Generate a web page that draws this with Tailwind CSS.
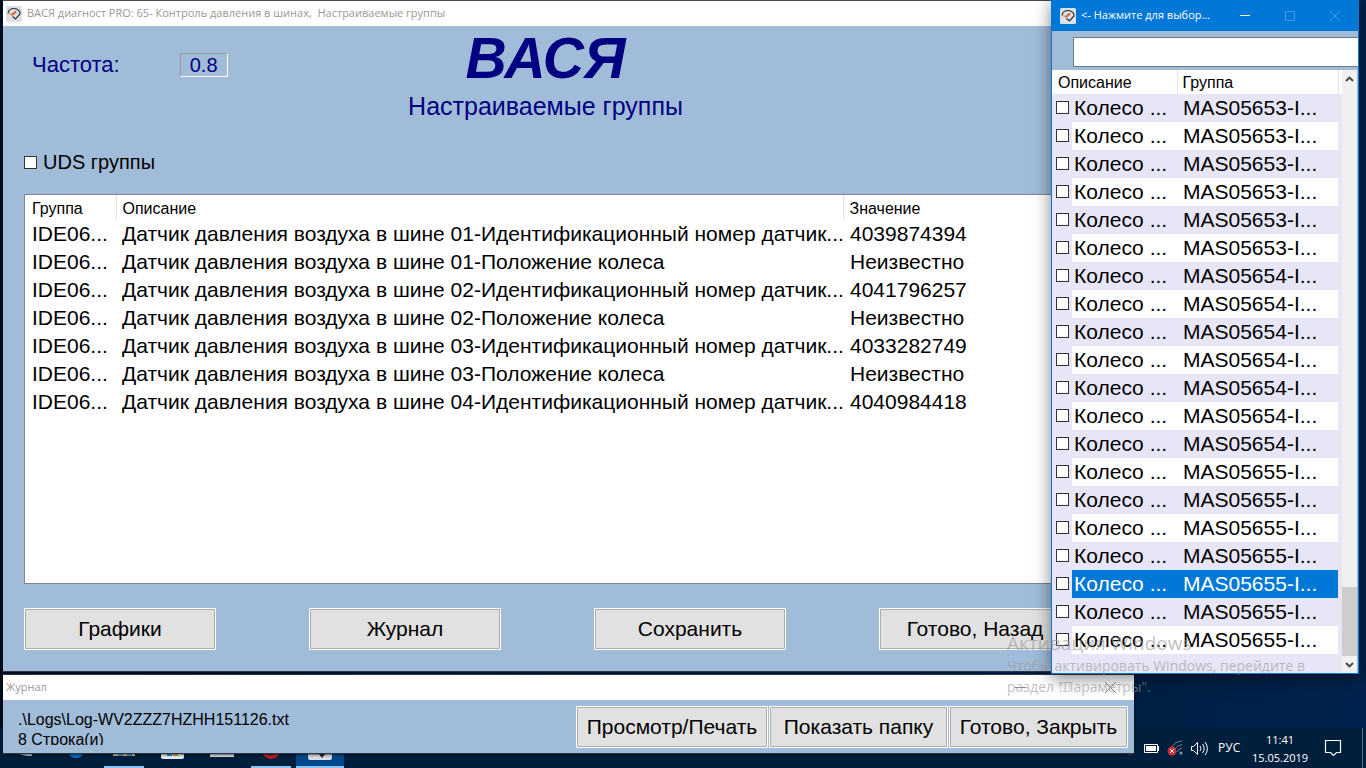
<!DOCTYPE html>
<html lang="ru">
<head>
<meta charset="utf-8">
<title>ВАСЯ диагност PRO</title>
<script src="https://cdn.jsdelivr.net/npm/@tailwindcss/browser@4"></script>
</head>
<body class="relative h-screen overflow-hidden bg-[#001b3d] bg-linear-to-r from-[#000d1e] to-[#00234d] font-['Liberation_Sans',sans-serif] text-black">

<!-- Taskbar -->
<footer class="absolute inset-x-0 bottom-0 flex h-10 justify-between bg-[#001f3d] font-['Open_Sans',sans-serif] text-white">
  <svg class="h-10 w-[350px]" viewBox="0 0 350 40" aria-hidden="true">
    <path d="M19 26 L32 26 L32 28 L27 28 Z" fill="#c9ced6"/>
    <circle cx="76" cy="22" r="8" fill="#0b74d1"/>
    <path d="M104 38h40v2h-40z" fill="#8cc4f0"/>
    <path d="M113 20h22v8h-22z" fill="#d9d08c"/><path d="M118 20h5v8h-5zM127 20h5v8h-5z" fill="#4d9db5"/>
    <path d="M161 20h23v9q0 2-2 2h-19q-2 0-2-2z" fill="#e8eef2"/><path d="M167 20h5v8h-5z" fill="#2196d3"/><path d="M173 20h5v8h-5z" fill="#e2a928"/>
    <path d="M210 20h24v9h-24z" fill="#dfe1e4"/>
    <circle cx="271" cy="21" r="8" fill="none" stroke="#b8202c" stroke-width="4"/>
    <path d="M251 38h40v2h-40z" fill="#8cc4f0"/>
    <path d="M296 0h48v40h-48z" fill="#00488a"/><path d="M296 38h48v2h-48z" fill="#8cc4f0"/>
    <rect x="308" y="14" width="24" height="18" rx="2" fill="#d9dfe3"/><path d="M319 26l3 4 3-4z" fill="#222"/>
  </svg>
  <div class="flex items-center">
    <svg class="h-10 w-[116px]" viewBox="0 0 116 40" fill="none" aria-label="Батарея, сеть, громкость">
      <circle cx="36" cy="23" r="4" fill="#c22534"/>
      <path d="M50.500 16.500h13v8h-13z" stroke="#fff"/><path d="M52 18h10v5h-10z" fill="#fff"/><path d="M64 18h1v5h-1z" fill="#fff"/>
      <path d="M77 20a14 14 0 0 1 11-7M80 22a11 11 0 0 1 8-5.500M83 24a7 7 0 0 1 5-4" stroke="#71869c"/><circle cx="87" cy="25" r="1.500" fill="#8798a9"/>
      <circle cx="78" cy="23" r="4.500" fill="#d52b36"/><path d="M76 21l4 4M80 21l-4 4" stroke="#fff"/>
      <path d="M97.500 18.500h2l4-4v12l-4-4h-2zM106 18a4 4 0 0 1 0 5M108.500 16a7 7 0 0 1 0 9M111 14a10 10 0 0 1 0 13" stroke="#fff"/>
    </svg>
    <span class="w-[30px] pl-2 text-xs">РУС</span>
    <time class="w-20 pt-px text-center text-[11px] leading-[18px]">11:41<br>15.05.2019</time>
    <svg class="h-10 w-[42px]" viewBox="0 0 42 40" fill="none" aria-label="Уведомления"><path d="M5.500 12.500h15v12h-4l-3 3-3-3h-5z" stroke="#fff" stroke-width="1.200"/></svg>
    <span class="h-10 w-1 border-l border-[#5c6f84]"></span>
  </div>
</footer>

<!-- Main window -->
<main class="absolute left-[3px] right-[274px] top-0 flex h-[672px] flex-col border-y border-b-[#2b3b4c] border-t-[#4a4a4a] bg-[#a0bcd9]">
  <header class="flex h-[25px] shrink-0 items-center gap-[5px] bg-white px-[3px] font-['Open_Sans',sans-serif] text-[11px] text-[#999]">
    <svg class="size-4" viewBox="0 0 16 16" fill="none" aria-hidden="true"><rect width="16" height="16" rx="1.500" fill="#dde1e4"/><path d="M2 7.500C2.500 4 5.500 2.500 8 2.500C12 2.500 14.500 5.500 14 8L9.500 13L6.500 10.500" stroke="#25303b" stroke-width="1.200"/><path d="M3.500 7.500L6.500 9.500" stroke="#e58a63" stroke-width="1.300"/><path d="M6 9l4-3.500" stroke="#d95f2c" stroke-width="2"/></svg>
    <h2 class="whitespace-pre">ВАСЯ диагност PRO: 65- Контроль давления в шинах,  Настраиваемые группы</h2>
  </header>
  <div class="flex min-h-0 flex-1 flex-col px-[21px] pb-[21px]">
    <div class="grid h-[118px] shrink-0 grid-cols-[1fr_auto_1fr] text-[#000080]">
      <div class="flex items-start gap-[60px] pl-2 pt-[27px] text-[22px] leading-6">
        <span>Частота:</span>
        <output class="h-6 w-12 border border-b-white border-l-[#999] border-r-white border-t-[#999] text-center text-xl leading-[22px]">0.8</output>
      </div>
      <div class="pr-1 pt-1 text-center">
        <h1 class="text-[57px] font-bold italic leading-[56px]">ВАСЯ</h1>
        <p class="pt-1 text-[25px] leading-8">Настраиваемые группы</p>
      </div>
    </div>
    <label class="flex h-[50px] shrink-0 items-start gap-[6px] pt-[6px] text-xl leading-6"><input type="checkbox" class="mt-[6px] size-[13px] appearance-none border border-[#333] bg-white">UDS группы</label>
    <div class="min-h-0 flex-1 border border-[#7a8793] bg-white">
      <table class="w-full table-fixed border-collapse text-left text-[21px] leading-7">
        <colgroup><col class="w-[91px]"><col class="w-[727px]"><col></colgroup>
        <thead><tr class="h-[25px] text-base leading-[22px]"><th class="border-r border-[#e2e2e2] p-0 pl-[7px] pt-[3px] font-normal">Группа</th><th class="border-r border-[#e2e2e2] p-0 pl-[6px] pt-[3px] font-normal">Описание</th><th class="p-0 pl-[6px] pt-[3px] font-normal">Значение</th></tr></thead>
        <tbody id="values" class="whitespace-nowrap"></tbody>
      </table>
    </div>
    <div class="flex shrink-0 justify-between pt-6 text-[21px]">
      <button class="h-[42px] w-48 border border-white bg-[#e1e1e1] outline outline-1 -outline-offset-2 outline-[#adadad]">Графики</button>
      <button class="h-[42px] w-48 border border-white bg-[#e1e1e1] outline outline-1 -outline-offset-2 outline-[#adadad]">Журнал</button>
      <button class="h-[42px] w-48 border border-white bg-[#e1e1e1] outline outline-1 -outline-offset-2 outline-[#adadad]">Сохранить</button>
      <button class="h-[42px] w-48 border border-white bg-[#e1e1e1] outline outline-1 -outline-offset-2 outline-[#adadad]">Готово, Назад</button>
    </div>
  </div>
</main>

<!-- Log window -->
<section class="absolute left-[3px] right-[232px] top-[674px] border-y border-[#26384a] bg-[#a0bcd9] shadow-sm shadow-black/50">
  <header class="flex h-[25px] items-center justify-between bg-white pl-[3px] pr-[18px] font-['Open_Sans',sans-serif] text-[11px] text-[#999]">
    <h2>Журнал</h2>
    <div class="flex gap-[34px]">
      <button aria-label="Свернуть"><svg class="size-[11px]" viewBox="0 0 11 11"><path d="M0 5.500h11" stroke="#888"/></svg></button>
      <button aria-label="Развернуть"><svg class="size-[11px]" viewBox="0 0 11 11"><path d="M.5.500h9v9h-9z" fill="none" stroke="#ddd"/></svg></button>
      <button aria-label="Закрыть"><svg class="size-[11px]" viewBox="0 0 11 11"><path d="M0 0l11 11M11 0L0 11" stroke="#888"/></svg></button>
    </div>
  </header>
  <div class="flex h-[53px] items-start justify-between pl-[15px] pr-[6px]">
    <p class="mt-[10px] h-[35px] overflow-hidden text-base leading-5">.\Logs\Log-WV2ZZZ7HZHH151126.txt<br>8 Строка(и)</p>
    <div class="flex gap-px pt-[6px] text-[21px]">
      <button class="h-[42px] w-48 border border-white bg-[#e1e1e1] outline outline-1 -outline-offset-2 outline-[#adadad]">Просмотр/Печать</button>
      <button class="h-[42px] w-[179px] border border-white bg-[#e1e1e1] outline outline-1 -outline-offset-2 outline-[#adadad]">Показать папку</button>
      <button class="h-[42px] w-[179px] border border-white bg-[#e1e1e1] outline outline-1 -outline-offset-2 outline-[#adadad]">Готово, Закрыть</button>
    </div>
  </div>
</section>

<!-- Group picker window -->
<aside class="absolute right-[7px] top-0 flex h-[674px] w-[308px] flex-col overflow-hidden border-x border-b border-[#0078d7] bg-[#a0bcd9] shadow-[0_4px_16px_rgba(0,0,0,0.5)]">
  <header class="flex h-[31px] shrink-0 items-center bg-[#0078d7] pl-2 pr-[18px] font-['Open_Sans',sans-serif] text-[11px] text-white">
    <svg class="mr-[5px] size-4" viewBox="0 0 16 16" fill="none" aria-hidden="true"><rect width="16" height="16" rx="1.500" fill="#dde1e4"/><path d="M2 7.500C2.500 4 5.500 2.500 8 2.500C12 2.500 14.500 5.500 14 8L9.500 13L6.500 10.500" stroke="#25303b" stroke-width="1.200"/><path d="M3.500 7.500L6.500 9.500" stroke="#e58a63" stroke-width="1.300"/><path d="M6 9l4-3.500" stroke="#d95f2c" stroke-width="2"/></svg>
    <h2 class="flex-1 whitespace-nowrap">&lt;- Нажмите для выбор...</h2>
    <div class="flex gap-[35px]">
      <button aria-label="Свернуть"><svg class="size-[10px]" viewBox="0 0 10 10"><path d="M0 4.500h10" stroke="#fff"/></svg></button>
      <button aria-label="Развернуть"><svg class="size-[10px]" viewBox="0 0 10 10"><path d="M.5.500h9v9h-9z" fill="none" stroke="#3f9ae3"/></svg></button>
      <button aria-label="Закрыть"><svg class="size-[10px]" viewBox="0 0 10 10"><path d="M0 0l10 10M10 0L0 10" stroke="#4ba0e4"/></svg></button>
    </div>
  </header>
  <div class="shrink-0 pb-[3px] pl-[21px] pt-[6px]"><input type="text" aria-label="Поиск группы" class="block h-[30px] w-full border border-r-0 border-[#6f7a84] bg-white px-2 text-xl"></div>
  <div class="flex min-h-0 flex-1">
    <div class="flex-1 bg-[#e7e6f7]">
      <table class="w-full table-fixed border-collapse text-left text-[21px] leading-7">
        <colgroup><col class="w-5"><col class="w-[105px]"><col class="w-[161px]"><col></colgroup>
        <thead><tr class="h-6 bg-white text-base leading-[22px]"><th colspan="2" class="border-r border-[#e2e2e2] p-0 pl-[6px] pt-[2px] font-normal">Описание</th><th class="border-r border-[#e2e2e2] p-0 pl-[5px] pt-[2px] font-normal">Группа</th><td></td></tr></thead>
        <tbody id="groups" class="whitespace-nowrap"></tbody>
      </table>
    </div>
    <div class="mr-px flex w-[15px] flex-col items-center bg-[#f0f0f0]">
      <svg class="h-[17px] w-[15px]" viewBox="0 0 15 17" fill="none"><path d="M4 11l3.500-3.500L11 11" stroke="#444" stroke-width="1.800"/></svg>
      <span class="flex-1"></span>
      <span class="h-[69px] w-full bg-[#cdcdcd]"></span>
      <svg class="h-[17px] w-[15px]" viewBox="0 0 15 17" fill="none"><path d="M4 7l3.500 3.500L11 7" stroke="#444" stroke-width="1.800"/></svg>
    </div>
  </div>
</aside>

<!-- Activation watermark -->
<div class="pointer-events-none absolute right-[57px] top-[631px] w-[302px] whitespace-nowrap font-['Open_Sans',sans-serif] text-sm leading-[21px] text-[#969696]/60">
  <p class="text-[19px] leading-6">Активация Windows</p>
  <p>Чтобы активировать Windows, перейдите в<br>раздел "Параметры".</p>
</div>

<script>
const values = [
  ['01-Идентификационный номер датчик...', '4039874394'],
  ['01-Положение колеса', 'Неизвестно'],
  ['02-Идентификационный номер датчик...', '4041796257'],
  ['02-Положение колеса', 'Неизвестно'],
  ['03-Идентификационный номер датчик...', '4033282749'],
  ['03-Положение колеса', 'Неизвестно'],
  ['04-Идентификационный номер датчик...', '4040984418'],
];
document.getElementById('values').innerHTML = values.map(([d, v]) =>
  `<tr class="h-7"><td class="p-0 pl-[7px]">IDE06...</td><td class="p-0 pl-[6px]">Датчик давления воздуха в шине ${d}</td><td class="p-0 pl-[7px]">${v}</td></tr>`).join('');

const groups = [...Array(6).fill('MAS05653'), ...Array(7).fill('MAS05654'), ...Array(7).fill('MAS05655')];
document.getElementById('groups').innerHTML = groups.map((g, i) => {
  const tone = i === 17 ? 'bg-[#0078d7] text-white' : i % 2 ? 'bg-white' : 'bg-[#e7e6f7]';
  return `<tr class="h-7"><td class="p-0 pb-[2px] pl-1"><input type="checkbox" id="g${i}" class="block size-[13px] appearance-none border border-[#333] bg-white"></td><td class="p-0 pl-[2px] ${tone}"><label for="g${i}">Колесо ...</label></td><td class="p-0 pl-[6px] ${tone}">${g}-I...</td><td class="p-0"></td></tr>`;
}).join('');
</script>
</body>
</html>
